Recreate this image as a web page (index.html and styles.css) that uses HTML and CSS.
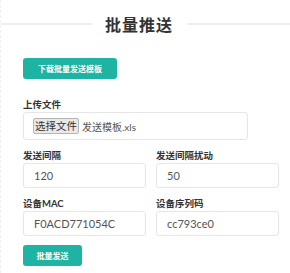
FILE: index.html
```html
<!DOCTYPE html>
<html lang="zh-CN">
<head>
  <meta charset="UTF-8">
  <meta name="viewport" content="width=device-width, initial-scale=1.0">
  <title>批量推送</title>
  <link rel="stylesheet" href="styles.css">
</head>
<body>
  <div class="page">
    <div class="title-row">
      <span class="line line-left"></span>
      <h2>批量推送</h2>
      <span class="line line-right"></span>
    </div>

    <form id="pushForm" class="form">
      <button type="button" class="btn btn-download">下载批量发送模板</button>

      <div class="group group-file">
        <label>上传文件</label>
        <div class="file-box">
          <span class="file-btn">选择文件</span>
          <span class="file-name">发送模板.xls</span>
        </div>
      </div>

      <div class="row">
        <div class="group">
          <label for="interval">发送间隔</label>
          <input type="text" id="interval" value="120">
        </div>
        <div class="group">
          <label for="jitter">发送间隔扰动</label>
          <input type="text" id="jitter" value="50">
        </div>
      </div>

      <div class="row">
        <div class="group">
          <label for="mac">设备MAC</label>
          <input type="text" id="mac" value="F0ACD771054C">
        </div>
        <div class="group">
          <label for="serial">设备序列码</label>
          <input type="text" id="serial" value="cc793ce0">
        </div>
      </div>

      <button type="submit" class="btn btn-submit">批量发送</button>
    </form>
  </div>
</body>
</html>
```

FILE: styles.css
```css
* {
  margin: 0;
  padding: 0;
  box-sizing: border-box;
}
body {
  font-family: Lato, "Noto Sans CJK SC", sans-serif;
  background: #fff;
  color: #333;
}
.page {
  width: 290px;
  height: 273px;
  border-left: 1px dashed #f0f0f0;
}
.title-row {
  height: 48px;
  display: flex;
  align-items: center;
}
.line {
  height: 2px;
  background-color: #eeeeee;
}
.line-left {
  width: 91px;
  margin-right: 13px;
}
.line-right {
  flex: 1;
  margin-left: 14px;
}
.title-row h2 {
  font-size: 16px;
  font-weight: bold;
  color: #333;
  letter-spacing: 1px;
}
.form {
  padding: 0 10px 0 22px;
}
.btn {
  display: block;
  height: 21px;
  border: none;
  border-radius: 3px;
  background-color: #1fb3a4;
  color: #fff;
  font-family: "Noto Sans CJK SC", sans-serif;
  font-size: 8px;
  font-weight: bold;
  cursor: pointer;
}
.btn-download {
  margin-top: 10px;
  width: 94px;
}
.btn-submit {
  margin-top: 9px;
  width: 59px;
}
.group label {
  display: block;
  height: 14px;
  line-height: 14px;
  font-size: 9.5px;
  font-weight: bold;
  color: #333;
}
.group-file {
  margin-top: 19px;
}
.file-box {
  width: 225px;
  height: 28px;
  border: 1px solid #e6e6e6;
  border-radius: 3px;
  display: flex;
  align-items: center;
  padding-left: 9px;
}
.file-btn {
  height: 16px;
  line-height: 14px;
  padding: 0 1px;
  border: 1px solid #b5b5b5;
  border-radius: 2px;
  background: #e9e9e9;
  font-size: 10.5px;
  color: #333;
}
.file-name {
  margin-left: 3px;
  font-size: 10px;
  color: #555;
}
.row {
  margin-top: 9px;
  display: flex;
  gap: 10px;
}
.row .group {
  width: 123px;
}
input {
  width: 100%;
  height: 25px;
  border: 1px solid #e6e6e6;
  border-radius: 3px;
  padding-left: 10px;
  font-family: Lato, sans-serif;
  font-size: 11px;
  color: #555;
  background: #fff;
  outline: none;
}
```
